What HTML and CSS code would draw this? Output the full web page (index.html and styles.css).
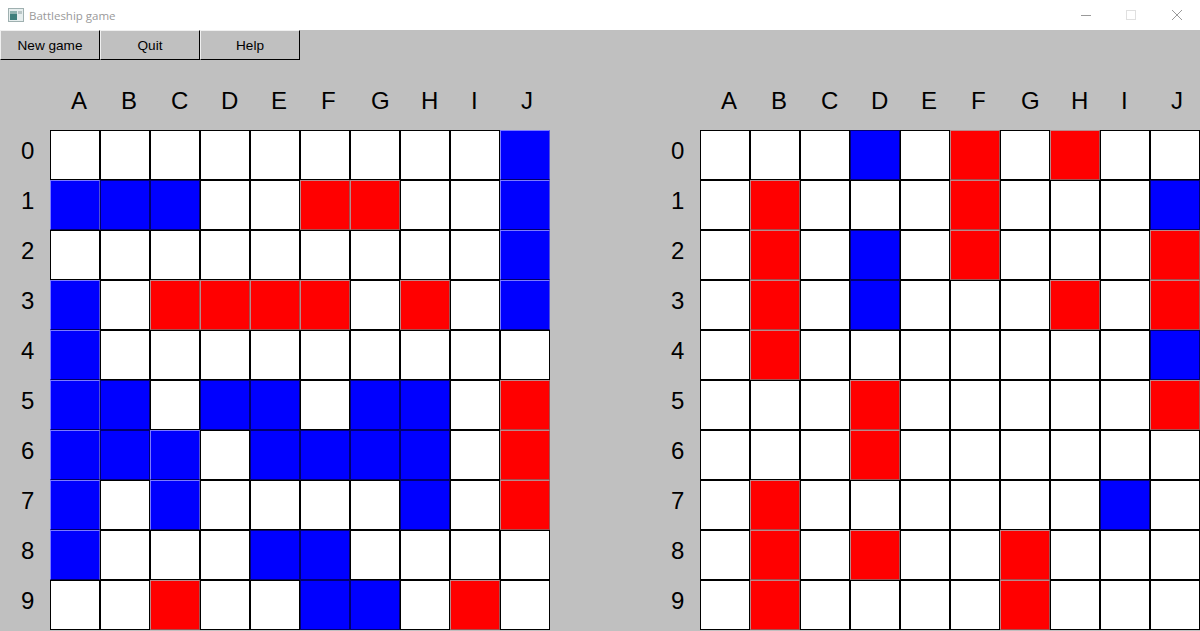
FILE: index.html
```html
<!DOCTYPE html>
<html lang="en">
<head>
<meta charset="utf-8">
<title>Battleship game</title>
<link rel="stylesheet" href="styles.css">
</head>
<body>
<header class="titlebar">
  <div class="title">
    <svg class="app-icon" width="16" height="14" viewBox="0 0 16 14"><rect x="0.5" y="0.5" width="15" height="13" fill="#e6eeee" stroke="#9fb0b0"/><rect x="2" y="3" width="7" height="9" fill="#3f7f7c"/><rect x="2" y="3" width="7" height="3" fill="#8fb3b0"/><rect x="10" y="3" width="4" height="3" fill="#b9c6c6"/></svg>
    <span>Battleship game</span>
  </div>
  <div class="controls">
    <svg width="12" height="12" viewBox="0 0 12 12"><path d="M2 6.5h10" stroke="#9a9a9a" fill="none"/></svg>
    <svg width="12" height="12" viewBox="0 0 12 12"><rect x="1.5" y="1.5" width="9" height="9" stroke="#e0e0e0" fill="none"/></svg>
    <svg width="12" height="12" viewBox="0 0 12 12"><path d="M1 1l10 10M11 1L1 11" stroke="#9a9a9a" fill="none"/></svg>
  </div>
</header>
<nav class="toolbar">
  <button class="tool">New game</button>
  <button class="tool">Quit</button>
  <button class="tool">Help</button>
</nav>
<main class="boards">
  <section class="board">
    <div class="corner"></div>
    <div class="col">A</div><div class="col">B</div><div class="col">C</div><div class="col">D</div><div class="col">E</div><div class="col">F</div><div class="col">G</div><div class="col">H</div><div class="col">I</div><div class="col">J</div>
    <div class="row">0</div><div class="c"></div><div class="c"></div><div class="c"></div><div class="c"></div><div class="c"></div><div class="c"></div><div class="c"></div><div class="c"></div><div class="c"></div><div class="c bl"></div>
    <div class="row">1</div><div class="c bl"></div><div class="c bd"></div><div class="c bd"></div><div class="c"></div><div class="c"></div><div class="c r"></div><div class="c r"></div><div class="c"></div><div class="c"></div><div class="c bl"></div>
    <div class="row">2</div><div class="c"></div><div class="c"></div><div class="c"></div><div class="c"></div><div class="c"></div><div class="c"></div><div class="c"></div><div class="c"></div><div class="c"></div><div class="c bl"></div>
    <div class="row">3</div><div class="c bl"></div><div class="c"></div><div class="c r"></div><div class="c r"></div><div class="c r"></div><div class="c r"></div><div class="c"></div><div class="c r"></div><div class="c"></div><div class="c bl"></div>
    <div class="row">4</div><div class="c bl"></div><div class="c"></div><div class="c"></div><div class="c"></div><div class="c"></div><div class="c"></div><div class="c"></div><div class="c"></div><div class="c"></div><div class="c"></div>
    <div class="row">5</div><div class="c bl"></div><div class="c bd"></div><div class="c"></div><div class="c bd"></div><div class="c bd"></div><div class="c"></div><div class="c bd"></div><div class="c bd"></div><div class="c"></div><div class="c r"></div>
    <div class="row">6</div><div class="c bl"></div><div class="c bd"></div><div class="c bl"></div><div class="c"></div><div class="c bd"></div><div class="c bd"></div><div class="c bd"></div><div class="c bd"></div><div class="c"></div><div class="c r"></div>
    <div class="row">7</div><div class="c bl"></div><div class="c"></div><div class="c bl"></div><div class="c"></div><div class="c"></div><div class="c"></div><div class="c"></div><div class="c bd"></div><div class="c"></div><div class="c r"></div>
    <div class="row">8</div><div class="c bl"></div><div class="c"></div><div class="c"></div><div class="c"></div><div class="c bd"></div><div class="c bd"></div><div class="c"></div><div class="c"></div><div class="c"></div><div class="c"></div>
    <div class="row">9</div><div class="c"></div><div class="c"></div><div class="c r"></div><div class="c"></div><div class="c"></div><div class="c bd"></div><div class="c bd"></div><div class="c"></div><div class="c r"></div><div class="c"></div>
  </section>
  <section class="board">
    <div class="corner"></div>
    <div class="col">A</div><div class="col">B</div><div class="col">C</div><div class="col">D</div><div class="col">E</div><div class="col">F</div><div class="col">G</div><div class="col">H</div><div class="col">I</div><div class="col">J</div>
    <div class="row">0</div><div class="c"></div><div class="c"></div><div class="c"></div><div class="c bd"></div><div class="c"></div><div class="c r"></div><div class="c"></div><div class="c r"></div><div class="c"></div><div class="c"></div>
    <div class="row">1</div><div class="c"></div><div class="c r"></div><div class="c"></div><div class="c"></div><div class="c"></div><div class="c r"></div><div class="c"></div><div class="c"></div><div class="c"></div><div class="c bd"></div>
    <div class="row">2</div><div class="c"></div><div class="c r"></div><div class="c"></div><div class="c bd"></div><div class="c"></div><div class="c r"></div><div class="c"></div><div class="c"></div><div class="c"></div><div class="c r"></div>
    <div class="row">3</div><div class="c"></div><div class="c r"></div><div class="c"></div><div class="c bd"></div><div class="c"></div><div class="c"></div><div class="c"></div><div class="c r"></div><div class="c"></div><div class="c r"></div>
    <div class="row">4</div><div class="c"></div><div class="c r"></div><div class="c"></div><div class="c"></div><div class="c"></div><div class="c"></div><div class="c"></div><div class="c"></div><div class="c"></div><div class="c bd"></div>
    <div class="row">5</div><div class="c"></div><div class="c"></div><div class="c"></div><div class="c r"></div><div class="c"></div><div class="c"></div><div class="c"></div><div class="c"></div><div class="c"></div><div class="c r"></div>
    <div class="row">6</div><div class="c"></div><div class="c"></div><div class="c"></div><div class="c r"></div><div class="c"></div><div class="c"></div><div class="c"></div><div class="c"></div><div class="c"></div><div class="c"></div>
    <div class="row">7</div><div class="c"></div><div class="c r"></div><div class="c"></div><div class="c"></div><div class="c"></div><div class="c"></div><div class="c"></div><div class="c"></div><div class="c bd"></div><div class="c"></div>
    <div class="row">8</div><div class="c"></div><div class="c r"></div><div class="c"></div><div class="c r"></div><div class="c"></div><div class="c"></div><div class="c r"></div><div class="c"></div><div class="c"></div><div class="c"></div>
    <div class="row">9</div><div class="c"></div><div class="c r"></div><div class="c"></div><div class="c"></div><div class="c"></div><div class="c"></div><div class="c r"></div><div class="c"></div><div class="c"></div><div class="c"></div>
  </section>
</main>
</body>
</html>
```
FILE: styles.css
```css
* { box-sizing: border-box; }
html, body { margin: 0; height: 100%; overflow: hidden; }
body {
  background: #c0c0c0;
  font-family: "Liberation Sans", Arial, sans-serif;
  color: #000;
}
.titlebar {
  height: 30px;
  background: #fff;
  display: flex;
  align-items: center;
  justify-content: space-between;
}
.title {
  display: flex;
  align-items: center;
  gap: 5px;
  padding-left: 8px;
  font: 11.5px "Open Sans", sans-serif;
  color: #9a9a9a;
}
.controls {
  display: flex;
  gap: 34px;
  padding-right: 17px;
  margin-top: -1px;
}
.toolbar { display: flex; height: 30px; }
.tool {
  width: 100px;
  height: 30px;
  padding: 0;
  background: #c0c0c0;
  border: 1px solid;
  border-color: #f0f0f0 #000 #000 #f0f0f0;
  border-radius: 0;
  font: 13.6px "Liberation Sans", Arial, sans-serif;
  color: #000;
}
.boards {
  display: flex;
  gap: 100px;
}
.board {
  display: grid;
  grid-template-columns: repeat(11, 50px);
  grid-template-rows: 70px repeat(10, 50px);
}
.col, .row {
  font-size: 24px;
  line-height: 40px;
  padding-left: 21px;
}
.col { padding-top: 21px; }
.row { height: 42px; line-height: 42px; }
.c {
  background: #fff;
  border: 1px solid #000;
}
.r {
  background: #f00;
  border-color: #b88a8a #a05050 #a05050 #b88a8a;
}
.bl {
  background: #00f;
  border-color: #7a7aff #5050d8 #00006a #7a7aff;
}
.bd {
  background: #00f;
  border-color: #000070;
}
```
